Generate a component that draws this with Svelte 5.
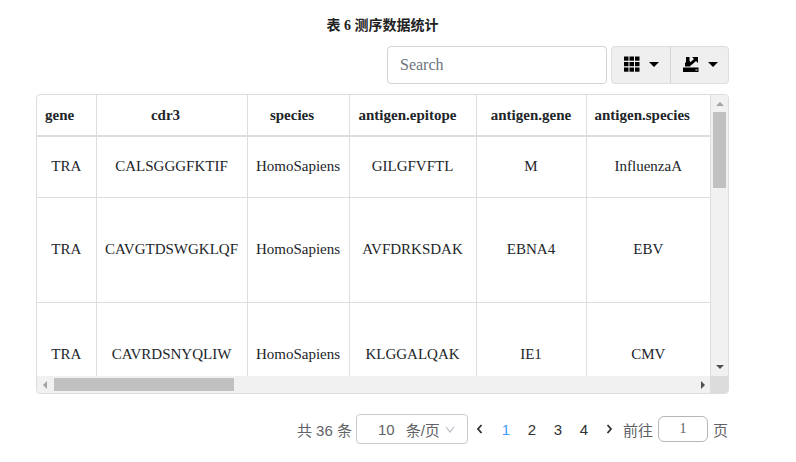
<script>
  const columns = [
    { key: 'gene', label: 'gene', width: 59, left: true },
    { key: 'cdr3', label: 'cdr3', width: 151 },
    { key: 'species', label: 'species', width: 102 },
    { key: 'epitope', label: 'antigen.epitope', width: 127 },
    { key: 'agene', label: 'antigen.gene', width: 110 },
    { key: 'aspecies', label: 'antigen.species', width: 124 },
  ];

  const rows = [
    { gene: 'TRA', cdr3: 'CALSGGGFKTIF', species: 'HomoSapiens', epitope: 'GILGFVFTL', agene: 'M', aspecies: 'InfluenzaA', h: 61 },
    { gene: 'TRA', cdr3: 'CAVGTDSWGKLQF', species: 'HomoSapiens', epitope: 'AVFDRKSDAK', agene: 'EBNA4', aspecies: 'EBV', h: 105 },
    { gene: 'TRA', cdr3: 'CAVRDSNYQLIW', species: 'HomoSapiens', epitope: 'KLGGALQAK', agene: 'IE1', aspecies: 'CMV', h: 105 },
  ];

  const pages = [1, 2, 3, 4];
  let current = $state(1);
  let search = $state('');
</script>

<div class="page">
  <div class="title">表 6 测序数据统计</div>

  <div class="toolbar">
    <input class="search" placeholder="Search" bind:value={search} />
    <div class="btn-group">
      <button class="tool first" aria-label="Columns">
        <svg width="16" height="16" viewBox="0 0 16 16">
          {#each [0, 5.5, 11] as y}
            {#each [0, 5.5, 11] as x}
              <rect x={x} y={y + 0.5} width="4.5" height="4.2" fill="#000" />
            {/each}
          {/each}
        </svg>
        <span class="caret"></span>
      </button>
      <button class="tool last" aria-label="Export">
        <svg width="16" height="17" viewBox="0 0 16 17">
          <path d="M0 11.5h15.5V16H0z" fill="#000" />
          <path d="M12.5 13.5h2v1h-2z" fill="#eee" />
          <path d="M3 1h3.5v4L9 7.5 7 10.5H2V7l1-1z" fill="#000" />
          <path d="M6.5 7 11 3 9 1h6v6l-2-2-4.5 4z" fill="#000" />
        </svg>
        <span class="caret"></span>
      </button>
    </div>
  </div>

  <div class="grid-box">
    <div class="viewport">
      <table>
        <colgroup>
          {#each columns as col}
            <col style="width: {col.width}px" />
          {/each}
        </colgroup>
        <thead>
          <tr>
            {#each columns as col}
              <th class:left={col.left}>{col.label}</th>
            {/each}
          </tr>
        </thead>
        <tbody>
          {#each rows as row}
            <tr style="height: {row.h}px">
              {#each columns as col}
                <td>{row[col.key]}</td>
              {/each}
            </tr>
          {/each}
        </tbody>
      </table>
    </div>

    <div class="vbar">
      <span class="arrow up"></span>
      <div class="vthumb"></div>
      <span class="arrow down"></span>
    </div>

    <div class="hbar">
      <span class="arrow back"></span>
      <div class="hthumb"></div>
      <span class="arrow fwd"></span>
    </div>
    <div class="corner"></div>
  </div>

  <div class="pager">
    <span class="total">共 36 条</span>
    <div class="size">
      <span class="size-val">10</span>
      <span class="size-unit">条/页</span>
      <svg class="chev" width="10" height="7" viewBox="0 0 10 7">
        <path d="M1 1l4 5 4-5" fill="none" stroke="#b4b8c0" stroke-width="1.1" />
      </svg>
    </div>
    <svg class="nav prev" width="7" height="10" viewBox="0 0 7 10">
      <path d="M5.5 1 2 5l3.5 4" fill="none" stroke="#303133" stroke-width="1.8" />
    </svg>
    {#each pages as p}
      <button class="num" class:active={p === current} onclick={() => (current = p)}>{p}</button>
    {/each}
    <svg class="nav next" width="7" height="10" viewBox="0 0 7 10">
      <path d="M1.5 1 5 5 1.5 9" fill="none" stroke="#303133" stroke-width="1.8" />
    </svg>
    <span class="goto">前往</span>
    <div class="jump">1</div>
    <span class="goto-end">页</span>
  </div>
</div>

<style>
  :global(body) {
    margin: 0;
    background: #fff;
  }
  .page {
    width: 796px;
    height: 462px;
    box-sizing: border-box;
    padding: 0 67px 0 36px;
    font-family: "Liberation Serif", "Noto Sans CJK SC", serif;
    color: #212529;
    overflow: hidden;
  }
  .title {
    height: 46px;
    padding-top: 17px;
    box-sizing: border-box;
    text-align: center;
    font-size: 14px;
    line-height: 18px;
    font-weight: 700;
    color: #222;
  }
  .toolbar {
    display: flex;
    justify-content: flex-end;
    gap: 4px;
    height: 38px;
    margin-bottom: 10px;
  }
  .search {
    width: 220px;
    height: 38px;
    box-sizing: border-box;
    border: 1px solid #ced4da;
    border-radius: 4px;
    padding: 0 12px;
    font: 16px "Liberation Serif", serif;
    color: #495057;
    outline: none;
  }
  .search::placeholder {
    color: #6c757d;
    opacity: 1;
  }
  .btn-group {
    display: flex;
    height: 38px;
    border: 1px solid #ddd;
    border-radius: 4px;
    box-sizing: border-box;
    background: #efefef;
  }
  .tool {
    display: flex;
    align-items: center;
    justify-content: flex-start;
    gap: 9px;
    border: 0;
    background: none;
    padding: 0 0 2px 12px;
    height: 100%;
  }
  .tool.first {
    width: 59px;
    border-right: 1px solid #d6d6d6;
  }
  .tool.last {
    width: 57px;
  }
  .caret {
    width: 0;
    height: 0;
    border-left: 5px solid transparent;
    border-right: 5px solid transparent;
    border-top: 5px solid #000;
  }
  .grid-box {
    display: grid;
    grid-template-columns: 673px 18px;
    grid-template-rows: 281px 17px;
    width: 693px;
    height: 300px;
    box-sizing: border-box;
    border: 1px solid #ddd;
    border-radius: 4px;
    overflow: hidden;
  }
  .viewport {
    overflow: hidden;
  }
  table {
    table-layout: fixed;
    width: 673px;
    border-collapse: collapse;
    font-size: 15px;
  }
  th {
    height: 40px;
    padding: 0;
    text-align: center;
    font-weight: 700;
    color: #212529;
    border-right: 1px solid #ddd;
    border-bottom: 2px solid #ddd;
    white-space: nowrap;
  }
  th.left {
    text-align: left;
    padding-left: 8px;
  }
  th:nth-child(2),
  th:nth-child(3),
  th:nth-child(6) {
    padding-right: 12px;
  }
  th:nth-child(4) {
    padding-right: 10px;
  }
  td {
    padding: 0;
    text-align: center;
    border-right: 1px solid #ddd;
    border-bottom: 1px solid #ddd;
    white-space: nowrap;
  }
  th:last-child,
  td:last-child {
    border-right: 0;
  }
  .vbar {
    position: relative;
    background: #f1f1f1;
    border-left: 1px solid #ddd;
    display: flex;
    flex-direction: column;
    align-items: center;
  }
  .vthumb {
    width: 13px;
    height: 76px;
    margin-top: 6px;
    background: #c1c1c1;
  }
  .hbar {
    display: flex;
    align-items: center;
    background: #f1f1f1;
    padding-left: 6px;
    position: relative;
  }
  .hthumb {
    width: 180px;
    height: 13px;
    margin-left: 7px;
    background: #c1c1c1;
  }
  .corner {
    background: #dcdcdc;
  }
  .arrow {
    width: 0;
    height: 0;
    flex: none;
  }
  .arrow.up {
    margin-top: 7px;
    border-left: 4px solid transparent;
    border-right: 4px solid transparent;
    border-bottom: 4px solid #a3a3a3;
  }
  .arrow.down {
    position: absolute;
    bottom: 7px;
    border-left: 4px solid transparent;
    border-right: 4px solid transparent;
    border-top: 4px solid #505050;
  }
  .arrow.back {
    border-top: 4px solid transparent;
    border-bottom: 4px solid transparent;
    border-right: 4px solid #a3a3a3;
  }
  .arrow.fwd {
    position: absolute;
    right: 5px;
    border-top: 4px solid transparent;
    border-bottom: 4px solid transparent;
    border-left: 4px solid #505050;
  }
  .pager {
    display: flex;
    align-items: center;
    justify-content: flex-end;
    height: 30px;
    margin-top: 20px;
    margin-right: 1px;
    font: 15px "Liberation Sans", "Noto Sans CJK SC", sans-serif;
    color: #606266;
  }
  .total {
    margin-right: 4px;
  }
  .size {
    display: flex;
    align-items: center;
    width: 112px;
    height: 30px;
    box-sizing: border-box;
    border: 1px solid #c9cbd0;
    border-radius: 4px;
    padding-left: 21px;
  }
  .size-unit {
    margin-left: 11px;
  }
  .chev {
    margin-left: 5px;
  }
  .nav.prev {
    margin-left: 8.5px;
  }
  .nav.next {
    margin-left: 9.5px;
  }
  .num {
    width: 26px;
    height: 28px;
    padding: 0;
    border: 0;
    background: none;
    font: 15px "Liberation Sans", sans-serif;
    color: #303133;
  }
  .prev + .num {
    margin-left: 9.5px;
  }
  .num.active {
    color: #409eff;
  }
  .goto {
    margin-left: 9.5px;
  }
  .jump {
    width: 50px;
    height: 26px;
    box-sizing: border-box;
    margin-left: 5px;
    border: 1px solid #b5b7bb;
    border-radius: 6px;
    text-align: center;
    line-height: 24px;
    font-family: "Liberation Serif", serif;
    font-size: 14px;
  }
  .goto-end {
    margin-left: 5px;
  }
</style>
